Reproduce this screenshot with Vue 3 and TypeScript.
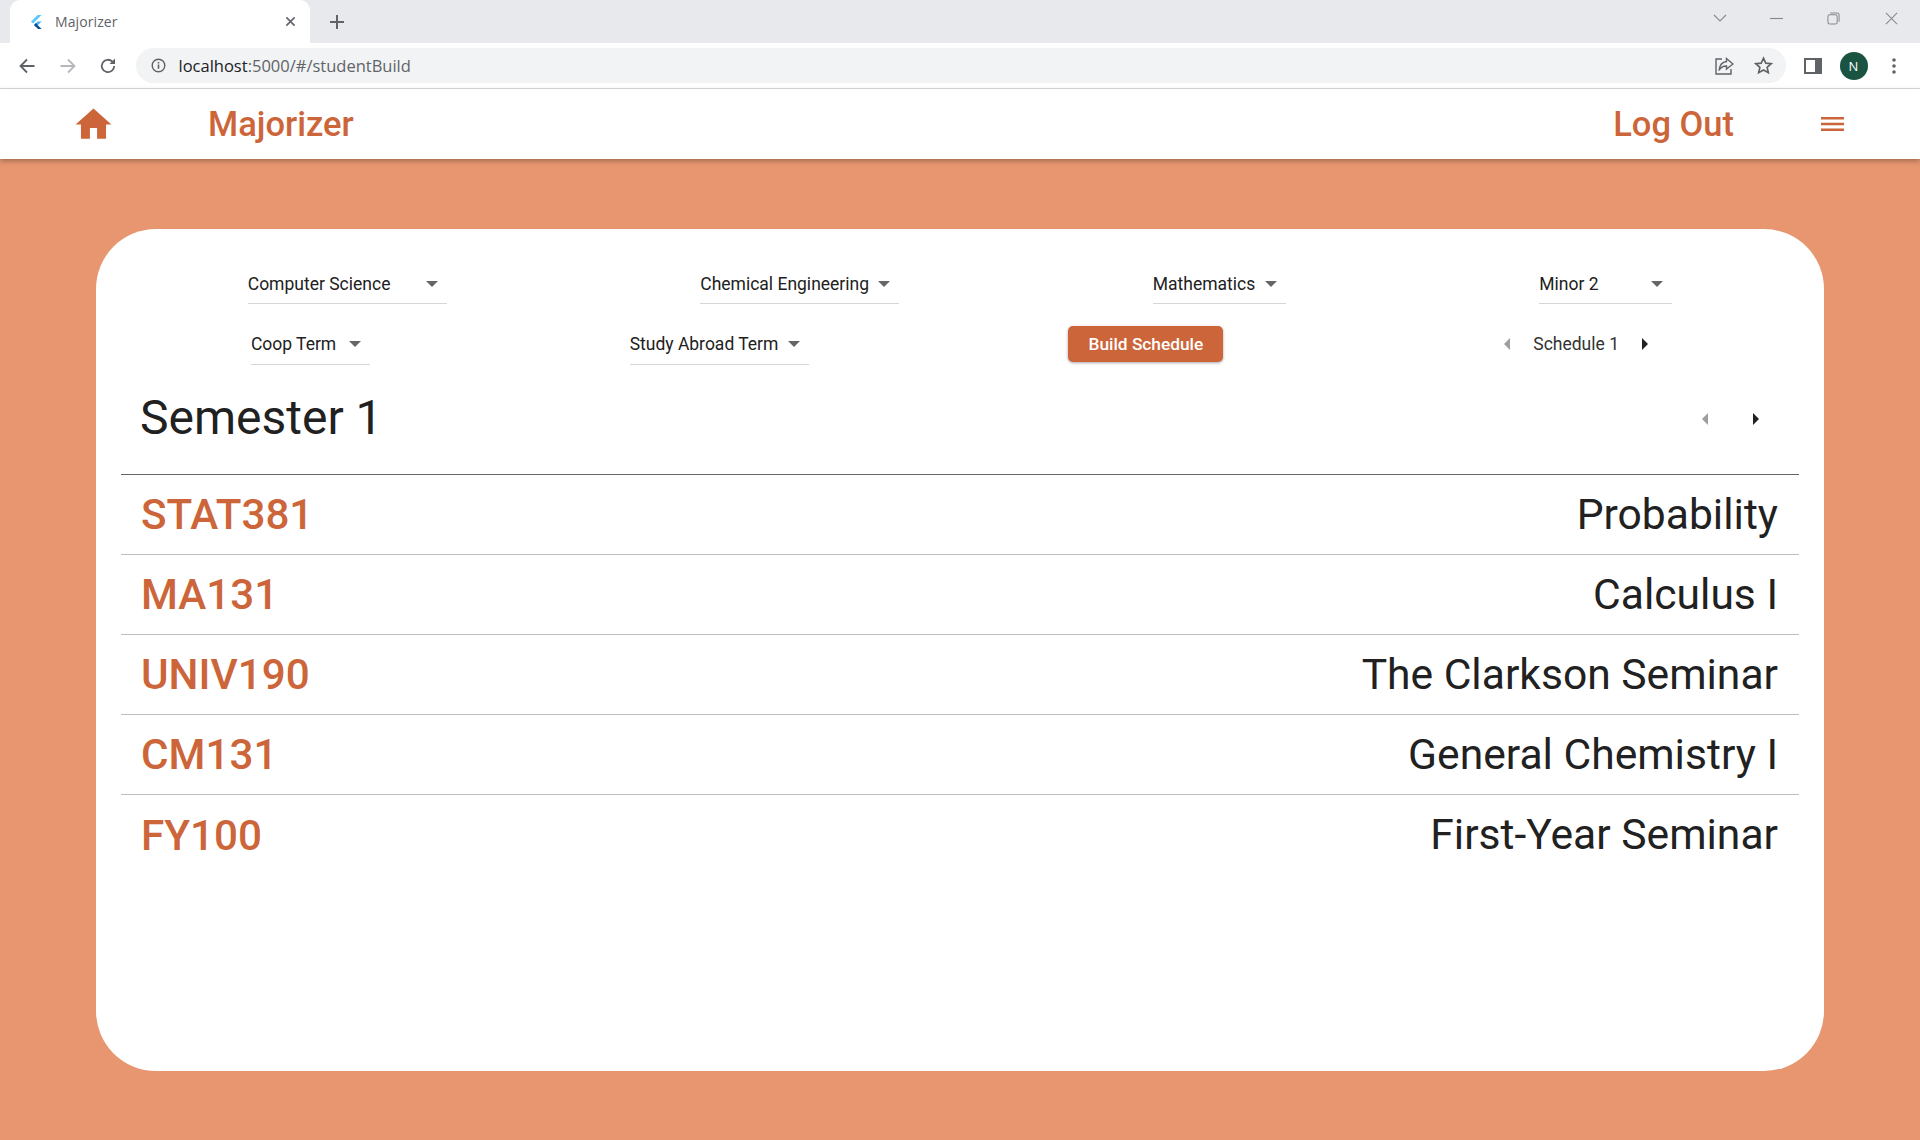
<script setup lang="ts">
interface Course {
  code: string
  name: string
}

const courses: Course[] = [
  { code: 'STAT381', name: 'Probability' },
  { code: 'MA131', name: 'Calculus I' },
  { code: 'UNIV190', name: 'The Clarkson Seminar' },
  { code: 'CM131', name: 'General Chemistry I' },
  { code: 'FY100', name: 'First-Year Seminar' },
]

const majors = [
  { label: 'Computer Science', cls: 'w-major' },
  { label: 'Chemical Engineering', cls: 'w-major' },
  { label: 'Mathematics', cls: 'w-minor' },
  { label: 'Minor 2', cls: 'w-minor' },
]
</script>

<template>
  <div class="page">
    <header class="browser">
      <div class="tabstrip">
        <div class="tab">
          <svg class="favicon" viewBox="0 0 16 16">
            <path d="M9.6 1 3 7.6l2 2L13.6 1z" fill="#5cc8f8" />
            <path d="M9.6 7.4 6 11l2 2 5.6-5.6z" fill="#45b6f0" />
            <path d="M6 11l2 2 2 2h3.6L9.8 11.200 8 9z" fill="#0d4f94" />
          </svg>
          <span class="tab-title">Majorizer</span>
          <svg class="tab-close" viewBox="0 0 12 12">
            <path d="M1.500 1.500l9 9M10.500 1.500l-9 9" stroke="#5f6368" stroke-width="1.700" fill="none" />
          </svg>
        </div>
        <svg class="new-tab" viewBox="0 0 16 16">
          <path d="M8 1v14M1 8h14" stroke="#5f6368" stroke-width="2" fill="none" />
        </svg>
        <div class="win-controls">
          <svg class="win chev" viewBox="0 0 14 8">
            <path d="M1 1l6 6 6-6" stroke="#85888d" stroke-width="1.100" fill="none" />
          </svg>
          <svg class="win min" viewBox="0 0 14 14">
            <path d="M0 7h14" stroke="#85888d" stroke-width="1.200" fill="none" />
          </svg>
          <svg class="win max" viewBox="0 0 14 14">
            <rect x="1" y="3" width="10" height="10" rx="2" stroke="#85888d" stroke-width="1.100" fill="none" />
            <path d="M3.500 1H11a2 2 0 0 1 2 2v7.500" stroke="#85888d" stroke-width="1.100" fill="none" />
          </svg>
          <svg class="win close" viewBox="0 0 14 14">
            <path d="M1 1l12 12M13 1 1 13" stroke="#85888d" stroke-width="1.100" fill="none" />
          </svg>
        </div>
      </div>
      <div class="toolbar">
        <svg class="tool back" viewBox="0 0 18 18">
          <path d="M16.500 9H3M9 2.500 2.500 9 9 15.500" stroke="#5f6368" stroke-width="1.800" fill="none" />
        </svg>
        <svg class="tool forward" viewBox="0 0 18 18">
          <path d="M1.500 9H15M9 2.500 15.500 9 9 15.500" stroke="#b5b7ba" stroke-width="1.800" fill="none" />
        </svg>
        <svg class="tool reload" viewBox="0 0 18 18">
          <path d="M15.200 9a6.200 6.200 0 1 1-1.800-4.400" stroke="#5f6368" stroke-width="1.800" fill="none" />
          <path d="M16 1.500V7h-5.500z" fill="#5f6368" />
        </svg>
        <div class="omnibox">
          <svg class="info" viewBox="0 0 16 16">
            <circle cx="8" cy="8" r="6.700" stroke="#5f6368" stroke-width="1.500" fill="none" />
            <path d="M8 7v4.500M8 4.300v1.500" stroke="#5f6368" stroke-width="1.700" fill="none" />
          </svg>
          <span class="url"><span class="host">localhost</span>:5000/#/studentBuild</span>
          <svg class="share" viewBox="0 0 20 20">
            <path d="M8 3H2v15h15v-5" stroke="#5f6368" stroke-width="1.400" fill="none" />
            <path d="M12.500 2.500 19 8l-6.500 5v-3C9 10 6.500 11.500 5 14.500 5.500 9.500 8 6 12.500 5.500z" stroke="#5f6368" stroke-width="1.400" fill="none" />
          </svg>
          <svg class="star" viewBox="0 0 20 20">
            <path d="M10 2.200l2.400 5.300 5.700.6-4.300 3.800 1.300 5.700L10 14.700l-5.100 2.900 1.300-5.700L1.900 8.100l5.700-.6z" stroke="#5f6368" stroke-width="1.700" fill="none" />
          </svg>
        </div>
        <svg class="panel" viewBox="0 0 18 16">
          <rect width="18" height="16" fill="#5f6368" />
          <rect x="2" y="2" width="9" height="12" fill="#fff" />
        </svg>
        <div class="avatar">N</div>
        <svg class="dots" viewBox="0 0 4 16">
          <circle cx="2" cy="2" r="1.800" fill="#5f6368" />
          <circle cx="2" cy="8" r="1.800" fill="#5f6368" />
          <circle cx="2" cy="14" r="1.800" fill="#5f6368" />
        </svg>
      </div>
    </header>

    <nav class="appbar">
      <svg class="home" viewBox="0 0 24 24">
        <path d="M10 20v-6h4v6h5v-8h3L12 3 2 12h3v8z" fill="#cc6539" />
      </svg>
      <span class="brand">Majorizer</span>
      <span class="logout">Log Out</span>
      <svg class="menu" viewBox="0 0 23 14">
        <path d="M0 1.200h23M0 7h23M0 12.800h23" stroke="#cc6539" stroke-width="2.400" fill="none" />
      </svg>
    </nav>

    <main class="content">
      <section class="card">
        <div class="row first">
          <div v-for="m in majors" :key="m.label" class="dropdown" :class="m.cls">
            <span class="dd-label">{{ m.label }}</span>
            <i class="caret"></i>
          </div>
        </div>
        <div class="row second">
          <div class="dropdown w-coop">
            <span class="dd-label">Coop Term</span>
            <i class="caret"></i>
          </div>
          <div class="dropdown w-abroad">
            <span class="dd-label">Study Abroad Term</span>
            <i class="caret"></i>
          </div>
          <button class="build" type="button">Build Schedule</button>
          <div class="pager">
            <span class="nav"><i class="tri left"></i></span>
            <span class="pager-label">Schedule 1</span>
            <span class="nav"><i class="tri right"></i></span>
          </div>
        </div>

        <div class="semester">
          <h1>Semester 1</h1>
          <div class="semester-nav">
            <span class="nav"><i class="tri left"></i></span>
            <span class="nav"><i class="tri right"></i></span>
          </div>
        </div>

        <ul class="courses">
          <li v-for="c in courses" :key="c.code">
            <span class="code">{{ c.code }}</span>
            <span class="name">{{ c.name }}</span>
          </li>
        </ul>
      </section>
    </main>
  </div>
</template>

<style scoped>
.page {
  width: 1920px;
  height: 1140px;
  display: flex;
  flex-direction: column;
  background: #e79670;
  font-family: Roboto, "Liberation Sans", sans-serif;
  color: #212121;
  overflow: hidden;
}

.browser {
  background: #fff;
  border-bottom: 1px solid #dadce0;
  height: 89px;
  box-sizing: border-box;
}
.tabstrip {
  height: 43px;
  background: #e7e9ed;
  display: flex;
  align-items: center;
  padding-left: 10px;
}
.tab {
  width: 300px;
  height: 43px;
  background: #fff;
  border-radius: 10px 10px 0 0;
  display: flex;
  align-items: center;
  padding-left: 18px;
  box-sizing: border-box;
}
.favicon {
  width: 16px;
  height: 16px;
}
.tab-title {
  margin-left: 11px;
  font: 14px "Open Sans", sans-serif;
  letter-spacing: 0.1px;
  color: #5f6368;
  flex: 1;
}
.tab-close {
  width: 11px;
  height: 11px;
  margin-right: 14px;
}
.new-tab {
  width: 16px;
  height: 16px;
  margin-left: 19px;
}
.win-controls {
  margin-left: auto;
  display: flex;
  align-items: center;
  height: 36px;
  align-self: flex-start;
}
.win {
  display: block;
}
.chev {
  width: 14px;
  height: 8px;
  margin-right: 43px;
}
.min {
  width: 13px;
  height: 13px;
  margin-right: 44px;
}
.max {
  width: 13px;
  height: 13px;
  margin-right: 45px;
}
.close {
  width: 13px;
  height: 13px;
  margin-right: 22px;
}

.toolbar {
  height: 45px;
  display: flex;
  align-items: center;
  padding-left: 18px;
}
.tool {
  width: 18px;
  height: 18px;
  margin-right: 22.500px;
}
.omnibox {
  width: 1650px;
  margin-left: -4px;
  height: 35px;
  border-radius: 18px;
  background: #f1f3f4;
  display: flex;
  align-items: center;
  padding-left: 15px;
  padding-right: 9px;
  box-sizing: border-box;
}
.info {
  width: 15px;
  height: 15px;
}
.url {
  margin-left: 13px;
  font: 16.500px "Open Sans", sans-serif;
  color: #5f6368;
  flex: 1;
}
.host {
  color: #202124;
}
.share {
  width: 20px;
  height: 20px;
  margin-right: 20px;
}
.star {
  width: 19px;
  height: 19px;
  margin-right: 4px;
}
.panel {
  width: 18px;
  height: 16px;
  margin-left: 18px;
}
.avatar {
  width: 28px;
  height: 28px;
  border-radius: 50%;
  background: #1a5341;
  color: #fff;
  font: 13px "Open Sans", sans-serif;
  display: flex;
  align-items: center;
  justify-content: center;
  margin-left: 18px;
}
.dots {
  width: 4px;
  height: 16px;
  margin-left: 24px;
}

.appbar {
  height: 70px;
  flex: none;
  background: #fff;
  display: flex;
  align-items: center;
  box-shadow: 0 2px 5px rgba(0, 0, 0, 0.3);
  position: relative;
  padding-left: 72px;
  color: #cc6539;
  font-size: 34.500px;
  font-weight: 500;
}
.home {
  width: 43px;
  height: 43px;
}
.brand {
  margin-left: 93px;
}
.logout {
  margin-left: auto;
  margin-right: 87px;
}
.menu {
  width: 23px;
  height: 14px;
  margin-right: 76px;
}

.content {
  flex: 1;
  padding: 70px 96px 69px;
  box-sizing: border-box;
  display: flex;
}
.card {
  flex: 1;
  background: #fff;
  border-radius: 60px;
  padding: 33px 25px 0;
  display: flex;
  flex-direction: column;
}

.row {
  display: flex;
  justify-content: space-around;
  align-items: flex-end;
  font-size: 17.500px;
}
.row.second {
  margin-top: 19px;
}

.dropdown {
  height: 42px;
  border-bottom: 1.500px solid #d6d6d6;
  display: flex;
  align-items: center;
  box-sizing: border-box;
  padding-top: 2px;
}
.row.second .dropdown {
  padding-top: 0;
}
.dd-label {
  flex: 1;
}
.caret {
  width: 0;
  height: 0;
  border-left: 6px solid transparent;
  border-right: 6px solid transparent;
  border-top: 6px solid #666;
  margin-right: 9px;
}
.w-major {
  width: 199px;
}
.w-minor {
  width: 133px;
}
.w-coop {
  width: 119px;
}
.w-abroad {
  width: 179px;
}

.build {
  width: 155px;
  height: 36px;
  margin-bottom: 3px;
  border: 0;
  border-radius: 5px;
  background: #cc6539;
  color: #fff;
  font: 500 17.300px Roboto, sans-serif;
  box-shadow: 0 1px 3px rgba(0, 0, 0, 0.35);
}

.pager {
  width: 186px;
  height: 42px;
  display: flex;
  align-items: center;
  justify-content: space-between;
}
.pager-label {
  color: #333;
}
.nav {
  width: 48px;
  height: 48px;
  display: flex;
  align-items: center;
  justify-content: center;
}
.tri {
  width: 0;
  height: 0;
  border-top: 6px solid transparent;
  border-bottom: 6px solid transparent;
}
.tri.left {
  border-right: 6px solid #9e9e9e;
}
.tri.right {
  border-left: 6px solid #212121;
}

.semester {
  height: 110px;
  flex: none;
  display: flex;
  align-items: center;
  justify-content: space-between;
  padding: 0 19px 0 19px;
  box-sizing: border-box;
  border-bottom: 1px solid #666;
}
.semester h1 {
  margin: -5px 0 0;
  font-size: 48px;
  font-weight: 400;
}
.semester-nav {
  display: flex;
  gap: 3px;
  margin-top: -2px;
}

.courses {
  list-style: none;
  margin: 0;
  padding: 0;
}
.courses li {
  height: 80px;
  display: flex;
  align-items: center;
  justify-content: space-between;
  padding: 0 21px 0 20px;
  box-sizing: border-box;
  border-bottom: 1px solid #bdbdbd;
  font-size: 42.600px;
}
.courses li:last-child {
  border-bottom: 0;
}
.code {
  color: #cc6539;
  font-size: 42.200px;
  font-weight: 500;
}
.name {
  margin-top: -2px;
}
</style>
